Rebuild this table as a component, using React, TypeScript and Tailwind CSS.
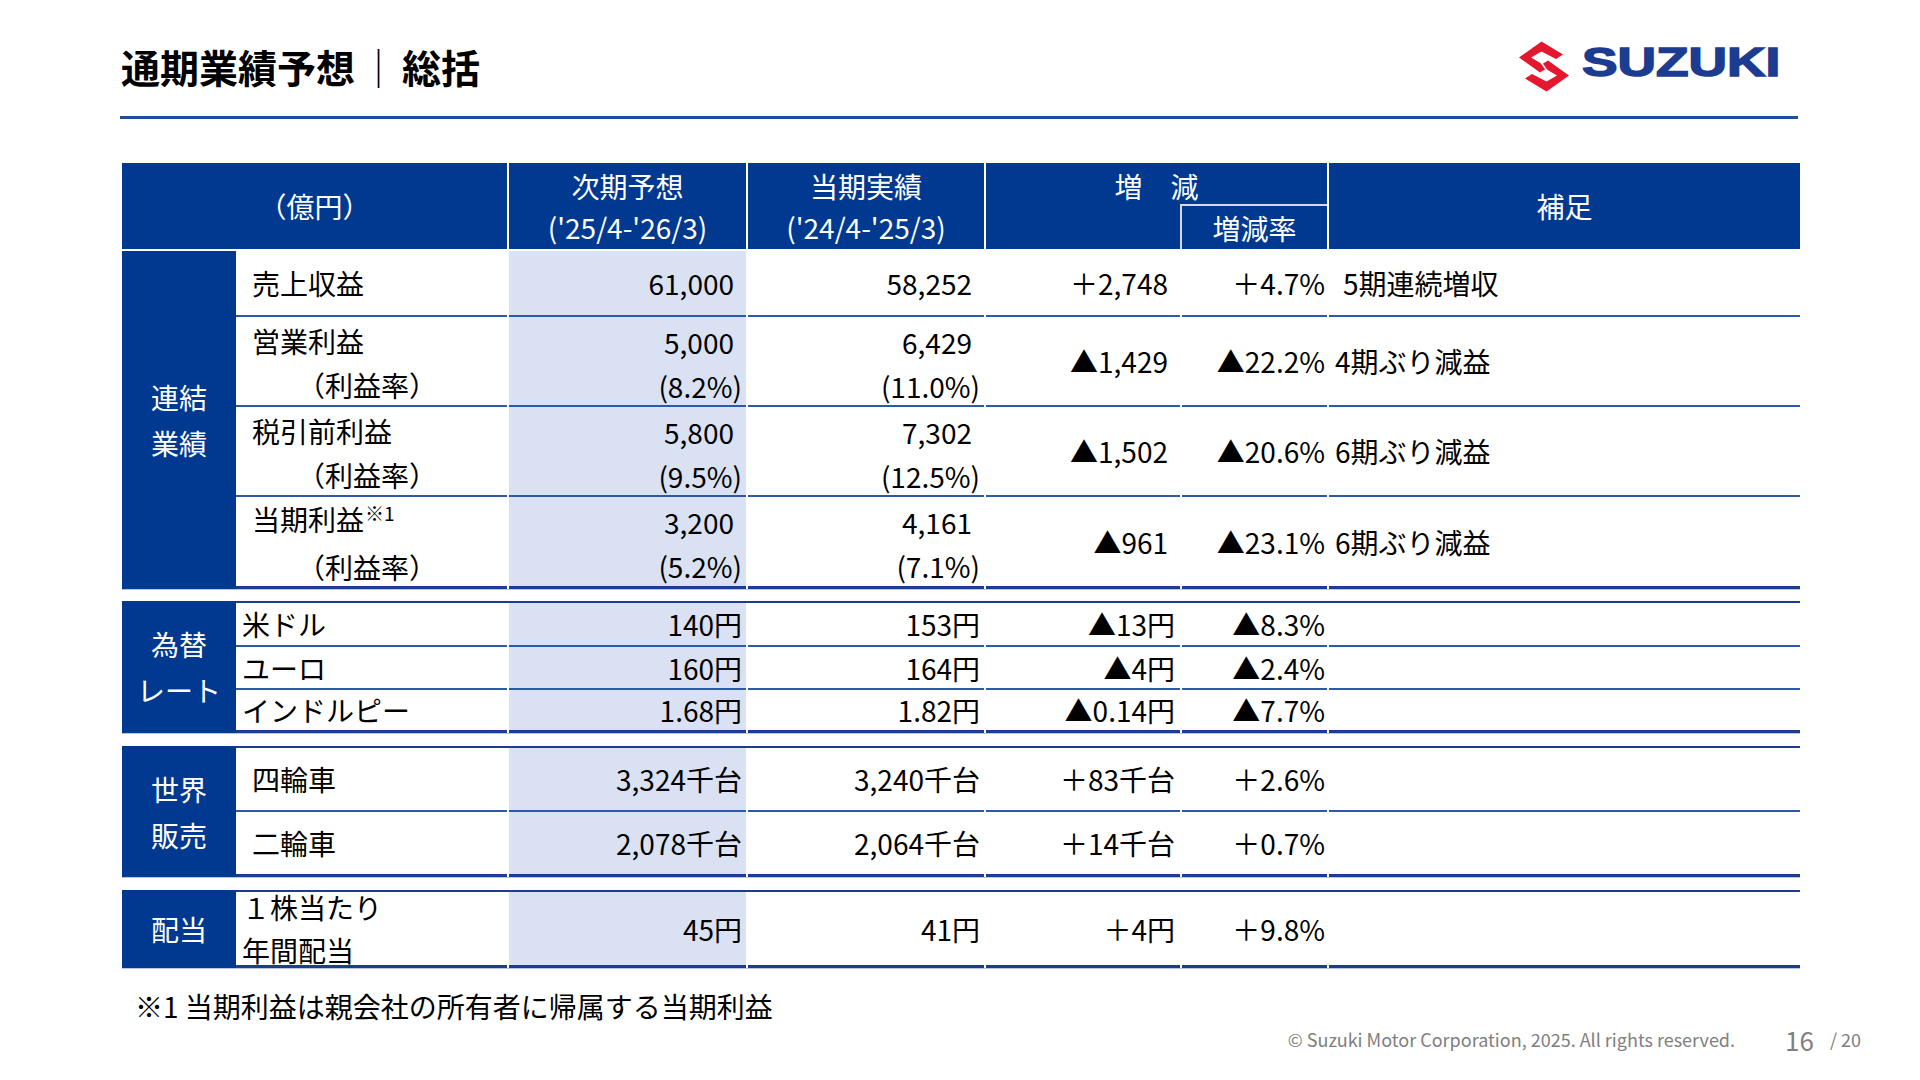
import React from "react";

const rowLine = "border-b-2 border-[#2d5aa8]";
const groupLine = "border-b-[3px] border-[#1c3d8f]";

type Cell = { main: string; sub?: string };

type RowProps = {
  h: string;
  last?: boolean;
  label: React.ReactNode;
  labelPad: string;
  b: Cell;
  c: Cell;
  d: string;
  e: string;
  f?: string;
  inset?: boolean;
  dPad?: string;
  fPad?: string;
};

const SuzukiMark = () => (
  <svg width="50" height="51" viewBox="0 0 100 100">
    <polygon fill="#e4172f" points="45,0 88,26 74,35 45,20 24,32 58,52 42,62 0,32" />
    <polygon fill="#e4172f" points="55,100 12,74 26,65 55,80 76,68 42,48 58,38 100,68" />
    <line x1="36" y1="30" x2="64" y2="70" stroke="white" strokeWidth="3" />
  </svg>
);

const DataRow = ({ h, last, label, labelPad, b, c, d, e, f, inset, dPad, fPad }: RowProps) => {
  const line = last ? groupLine : rowLine;
  return (
    <div className={`flex gap-[2px] ${h}`}>
      <div className={`w-[271px] shrink-0 ${line} ${labelPad} flex flex-col justify-center`}>{label}</div>
      {[b, c].map((v, i) => (
        <div
          key={i}
          className={`shrink-0 ${i === 0 ? "w-[237px] bg-[#d9e1f2]" : "w-[236px]"} ${line} ${
            v.sub ? "flex flex-col items-end pt-[3px] leading-[44px]" : "flex items-center justify-end"
          } pr-[4px]`}
        >
          <span className={inset ? "pr-[8px]" : ""}>{v.main}</span>
          {v.sub && <span>{v.sub}</span>}
        </div>
      ))}
      <div className={`w-[194px] shrink-0 ${line} flex items-center justify-end ${dPad ?? "pr-[5px]"}`}>{d}</div>
      <div className={`w-[145px] shrink-0 ${line} flex items-center justify-end pr-[2px]`}>{e}</div>
      <div className={`flex-1 ${line} flex items-center ${fPad ?? "pl-[14px]"}`}>{f}</div>
    </div>
  );
};

const Category = ({ lines }: { lines: string[] }) => (
  <div className="w-[114px] shrink-0 bg-[#00398f] text-white flex flex-col items-center justify-center">
    {lines.map((l) => (
      <span key={l} className="leading-[46px]">
        {l}
      </span>
    ))}
  </div>
);

const Light = () => <div className="h-px bg-[#b9c8e2]" />;

const TwoLabel = ({ top, sup }: { top: string; sup?: boolean }) => (
  <div className="flex-1 pt-[3px] leading-[44px]">
    <div>
      {top}
      {sup && <span className="text-[19px] relative -top-[10px] ml-[1px]">※1</span>}
    </div>
    <div className="pl-[45px]">（利益率）</div>
  </div>
);

export default function App() {
  return (
    <div className="w-[1920px] h-[1080px] bg-white text-black font-['Noto_Sans_CJK_JP','Noto_Sans',sans-serif] overflow-hidden">
      {/* header */}
      <div className="flex items-center justify-between h-[116px] pt-[16px] pl-[121px] pr-[138px]">
        <h1 className="text-[39px] font-bold leading-none flex items-center">
          通期業績予想<span className="font-normal mx-[4px]">｜</span>総括
        </h1>
        <div className="flex items-center gap-[13px]">
          <SuzukiMark />
          <div className="w-[200px] h-[40px] relative">
            <span className="absolute left-0 top-[-4px] origin-left scale-x-[1.3] font-['Liberation_Sans',sans-serif] font-bold text-[41px] leading-none text-[#1b3c90] [-webkit-text-stroke:1.5px_#1b3c90]">
              SUZUKI
            </span>
          </div>
        </div>
      </div>
      <div className="ml-[120px] w-[1678px] h-[3px] bg-[#1f4c9c]" />

      {/* table */}
      <div className="ml-[122px] w-[1678px] mt-[44px] text-[28px]">
        <div className="flex gap-[2px] h-[86px] bg-white text-white">
          <div className="w-[385px] bg-[#00398f] flex items-center justify-center">（億円）</div>
          <div className="w-[237px] bg-[#00398f] flex flex-col items-center pt-[3px] leading-[41px]">
            <span>次期予想</span>
            <span>('25/4-'26/3)</span>
          </div>
          <div className="w-[236px] bg-[#00398f] flex flex-col items-center pt-[3px] leading-[41px]">
            <span>当期実績</span>
            <span>('24/4-'25/3)</span>
          </div>
          <div className="w-[341px] bg-[#00398f] flex flex-col">
            <div className="h-[41px] flex items-end justify-center leading-[36px]">増　減</div>
            <div className="flex flex-1">
              <div className="w-[194px]" />
              <div className="flex-1 border-l-2 border-t-2 border-[#d4dcec] flex items-center justify-center">増減率</div>
            </div>
          </div>
          <div className="flex-1 bg-[#00398f] flex items-center justify-center">補足</div>
        </div>

        {/* 連結業績 */}
        <div className="mt-[2px]">
          <div className="flex">
            <Category lines={["連結", "業績"]} />
            <div className="flex-1 flex flex-col">
              <DataRow
                h="h-[66px]"
                inset
                label="売上収益"
                labelPad="pl-[16px]"
                b={{ main: "61,000" }}
                c={{ main: "58,252" }}
                d="＋2,748"
                e="＋4.7%"
                f="5期連続増収"
                dPad="pr-[12px]"
                fPad="pl-[14px]"
              />
              <DataRow
                h="h-[90px]"
                inset
                label={<TwoLabel top="営業利益" />}
                labelPad="pl-[16px]"
                b={{ main: "5,000", sub: "(8.2%)" }}
                c={{ main: "6,429", sub: "(11.0%)" }}
                d="▲1,429"
                e="▲22.2%"
                f="4期ぶり減益"
                dPad="pr-[12px]"
                fPad="pl-[6px]"
              />
              <DataRow
                h="h-[90px]"
                inset
                label={<TwoLabel top="税引前利益" />}
                labelPad="pl-[16px]"
                b={{ main: "5,800", sub: "(9.5%)" }}
                c={{ main: "7,302", sub: "(12.5%)" }}
                d="▲1,502"
                e="▲20.6%"
                f="6期ぶり減益"
                dPad="pr-[12px]"
                fPad="pl-[6px]"
              />
              <DataRow
                h="h-[92px]"
                last
                inset
                label={<TwoLabel top="当期利益" sup />}
                labelPad="pl-[16px]"
                b={{ main: "3,200", sub: "(5.2%)" }}
                c={{ main: "4,161", sub: "(7.1%)" }}
                d="▲961"
                e="▲23.1%"
                f="6期ぶり減益"
                dPad="pr-[12px]"
                fPad="pl-[6px]"
              />
            </div>
          </div>
          <Light />
        </div>

        {/* 為替レート */}
        <div className="mt-[11px]">
          <div className="flex">
            <Category lines={["為替", "レート"]} />
            <div className="flex-1 flex flex-col border-t-2 border-[#1c3d8f]">
              <DataRow h="h-[44px]" label="米ドル" labelPad="pl-[6px]" b={{ main: "140円" }} c={{ main: "153円" }} d="▲13円" e="▲8.3%" />
              <DataRow h="h-[43px]" label="ユーロ" labelPad="pl-[6px]" b={{ main: "160円" }} c={{ main: "164円" }} d="▲4円" e="▲2.4%" />
              <DataRow h="h-[43px]" last label="インドルピー" labelPad="pl-[6px]" b={{ main: "1.68円" }} c={{ main: "1.82円" }} d="▲0.14円" e="▲7.7%" />
            </div>
          </div>
          <Light />
        </div>

        {/* 世界販売 */}
        <div className="mt-[12px]">
          <div className="flex">
            <Category lines={["世界", "販売"]} />
            <div className="flex-1 flex flex-col border-t-2 border-[#1c3d8f]">
              <DataRow h="h-[64px]" label="四輪車" labelPad="pl-[16px]" b={{ main: "3,324千台" }} c={{ main: "3,240千台" }} d="＋83千台" e="＋2.6%" />
              <DataRow h="h-[65px]" last label="二輪車" labelPad="pl-[16px]" b={{ main: "2,078千台" }} c={{ main: "2,064千台" }} d="＋14千台" e="＋0.7%" />
            </div>
          </div>
          <Light />
        </div>

        {/* 配当 */}
        <div className="mt-[12px]">
          <div className="flex">
            <Category lines={["配当"]} />
            <div className="flex-1 flex flex-col border-t-2 border-[#1c3d8f]">
              <DataRow
                h="h-[76px]"
                last
                label={
                  <div className="flex-1 flex flex-col justify-between leading-[30px]">
                    <span>１株当たり</span>
                    <span>年間配当</span>
                  </div>
                }
                labelPad="pl-[6px]"
                b={{ main: "45円" }}
                c={{ main: "41円" }}
                d="＋4円"
                e="＋9.8%"
              />
            </div>
          </div>
          <Light />
        </div>
      </div>

      {/* footnote */}
      <p className="ml-[135px] mt-[19px] text-[28px] leading-[36px]">※1 当期利益は親会社の所有者に帰属する当期利益</p>

      <div className="flex items-center justify-end pr-[59px] h-[30px] text-[#808080]">
        <span className="text-[18px]">© Suzuki Motor Corporation, 2025. All rights reserved.</span>
        <span className="text-[26px] ml-[50px]">16</span>
        <span className="text-[18px] ml-[16px]">/ 20</span>
      </div>
    </div>
  );
}
